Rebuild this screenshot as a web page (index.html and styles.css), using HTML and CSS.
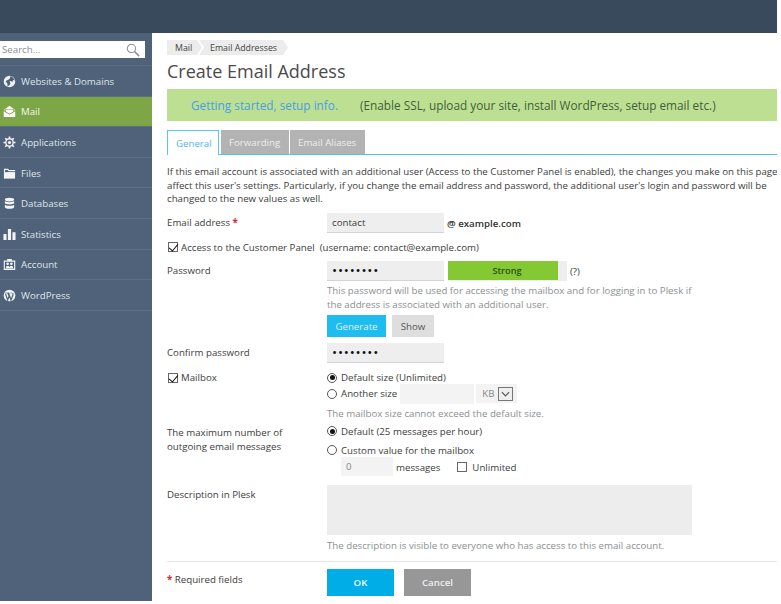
FILE: index.html
```html
<!DOCTYPE html>
<html lang="en">
<head>
<meta charset="utf-8">
<title>Create Email Address</title>
<link rel="stylesheet" href="styles.css">
</head>
<body>
<div class="page">
  <header class="topbar"></header>
  <div class="shell">
    <aside class="sidebar">
      <div class="search">
        <span class="search-text">Search...</span>
        <svg class="search-icon" viewBox="0 0 16 16" width="14" height="14"><circle cx="6.200" cy="6.200" r="4.700" fill="none" stroke="#8a8f93" stroke-width="1.200"/><path d="M9.800 9.800 15 15" stroke="#8a8f93" stroke-width="1.700"/></svg>
      </div>
      <nav class="nav">
        <a class="nav-item">
          <svg class="nav-icon" viewBox="0 0 14 14"><circle cx="7" cy="7" r="6.200" fill="#eef1f4"/><path d="M8 1.200C10 2 12 3.500 12.800 6L11 5.500 10 7.500 8.500 6.500 7 7 8 9 7 11 4.500 12.300C6 9 3.500 8 2.800 7 4 5.500 7 5 7.500 3.500Z" fill="#4e617a"/></svg>
          <span>Websites &amp; Domains</span>
        </a>
        <a class="nav-item active">
          <svg class="nav-icon" viewBox="0 0 14 14"><path d="M.8 5.500 7 .8 13.200 5.500 12 6.300V4.500H2V6.300Z" fill="#fff"/><path d="M3 5H11V7L7 9.300 3 7Z" fill="#fff"/><path d="M.8 6.800 7 10.500 13.200 6.800V13H.8Z" fill="#fff"/></svg>
          <span>Mail</span>
        </a>
        <a class="nav-item">
          <svg class="nav-icon" viewBox="0 0 14 14"><circle cx="7" cy="7" r="4" fill="none" stroke="#f2f4f6" stroke-width="1.500"/><circle cx="7" cy="7" r="1.700" fill="#f2f4f6"/><path d="M7 .5V3M7 11V13.500M.5 7H3M11 7H13.500M2.400 2.400 4 4M10 10 11.600 11.600M2.400 11.600 4 10M10 4 11.600 2.400" stroke="#f2f4f6" stroke-width="1.800"/></svg>
          <span>Applications</span>
        </a>
        <a class="nav-item">
          <svg class="nav-icon" viewBox="0 0 14 14"><path d="M1 1.800H5.500L6.500 3.200H13V4.500H6L5 3.300H2.200V5.300H1Z" fill="#f2f4f6"/><path d="M1 5.500H13V12.500H1Z" fill="#f2f4f6"/></svg>
          <span>Files</span>
        </a>
        <a class="nav-item">
          <svg class="nav-icon" viewBox="0 0 14 14"><ellipse cx="7" cy="2.800" rx="5" ry="2" fill="#f2f4f6"/><path d="M2 4.400C3 6 11 6 12 4.400V6.800C11 8.400 3 8.400 2 6.800ZM2 8.300C3 9.900 11 9.900 12 8.300V11C11 13.300 3 13.300 2 11Z" fill="#f2f4f6"/></svg>
          <span>Databases</span>
        </a>
        <a class="nav-item">
          <svg class="nav-icon" viewBox="0 0 14 14"><path d="M.5 6.500H3.800V12.800H.5ZM5.300 1.200H8.700V12.800H5.300ZM10.200 4.500H13.500V12.800H10.200Z" fill="#f2f4f6"/></svg>
          <span>Statistics</span>
        </a>
        <a class="nav-item">
          <svg class="nav-icon" viewBox="0 0 14 14"><path fill-rule="evenodd" d="M.8 2.800H4.500V1.200H9.500V2.800H13.200V12.800H.8ZM2 4V11.600H12V4Z" fill="#f2f4f6"/><circle cx="5" cy="6.300" r="1.400" fill="#f2f4f6"/><circle cx="9" cy="6.300" r="1.400" fill="#f2f4f6"/><path d="M2.800 11.300 3.800 8.500H6.200L7 9.800 7.800 8.500H10.200L11.200 11.300Z" fill="#f2f4f6"/></svg>
          <span>Account</span>
        </a>
        <a class="nav-item">
          <svg class="nav-icon" viewBox="0 0 14 14"><circle cx="7" cy="7" r="6.300" fill="#f2f4f6"/><path d="M2.700 5.300 5 11.800 6.600 7.500 5.300 4.300M6 4.300 8.600 11.800 10.700 6.500C11 5.500 10.800 5 10.400 4.200" fill="none" stroke="#4e617a" stroke-width="1.300"/><path d="M2 4.300H6.800M7.800 4.300H9.500" stroke="#4e617a" stroke-width=".7"/></svg>
          <span>WordPress</span>
        </a>
      </nav>
    </aside>
    <main class="content">
      <div class="crumbs">
        <span class="crumb first">Mail</span>
        <span class="crumb second">Email Addresses</span>
      </div>
      <h1 class="title">Create Email Address</h1>
      <div class="promo">
        <a class="promo-link">Getting started, setup info.</a>
        <span class="promo-text">(Enable SSL, upload your site, install WordPress, setup email etc.)</span>
      </div>
      <div class="tabs">
        <span class="tab current">General</span>
        <span class="tab">Forwarding</span>
        <span class="tab">Email Aliases</span>
      </div>
      <p class="intro">If this email account is associated with an additional user (Access to the Customer Panel is enabled), the changes you make on this page will affect this user's settings. Particularly, if you change the email address and password, the additional user's login and password will be changed to the new values as well.</p>

      <div class="row row-email">
        <label class="lbl">Email address <b class="req">*</b></label>
        <div class="field inline">
          <span class="input w117">contact</span>
          <span class="domain">@ example.com</span>
        </div>
      </div>

      <div class="row-check">
        <span class="check on"></span>
        <span>Access to the Customer Panel&nbsp; (username: contact@example.com)</span>
      </div>

      <div class="row row-pass">
        <label class="lbl">Password</label>
        <div class="field">
          <div class="inline">
            <span class="input w117 dots">••••••••</span>
            <span class="meter"><span class="meter-fill">Strong</span></span>
            <span class="hint-q">(?)</span>
          </div>
          <p class="note pass-note">This password will be used for accessing the mailbox and for logging in to Plesk if<br>the address is associated with an additional user.</p>
          <div class="inline btns">
            <span class="btn-small primary">Generate</span>
            <span class="btn-small">Show</span>
          </div>
        </div>
      </div>

      <div class="row row-confirm">
        <label class="lbl">Confirm password</label>
        <div class="field"><span class="input w117 dots">••••••••</span></div>
      </div>

      <div class="row row-mailbox">
        <label class="lbl check-lbl"><span class="check on"></span>Mailbox</label>
        <div class="field">
          <div class="radio-line first-line"><span class="radio on"></span>Default size (Unlimited)</div>
          <div class="radio-line size-line">
            <span class="radio"></span>Another size
            <span class="input light w74"></span>
            <span class="unit">KB <span class="select-arrow"><svg viewBox="0 0 10 6" width="9" height="6"><path d="M1 1 5 5 9 1" fill="none" stroke="#555" stroke-width="1.300"/></svg></span></span>
          </div>
          <p class="note box-note">The mailbox size cannot exceed the default size.</p>
        </div>
      </div>

      <div class="row row-limit">
        <label class="lbl">The maximum number of<br>outgoing email messages</label>
        <div class="field">
          <div class="radio-line"><span class="radio on"></span>Default (25 messages per hour)</div>
          <div class="radio-line custom-line"><span class="radio"></span>Custom value for the mailbox</div>
          <div class="inline msg-line">
            <span class="input light w52 zero">0</span>
            <span class="msg-word">messages</span>
            <span class="check"></span>
            <span>Unlimited</span>
          </div>
        </div>
      </div>

      <div class="row row-desc">
        <label class="lbl">Description in Plesk</label>
        <div class="field">
          <div class="textarea"></div>
          <p class="note desc-note">The description is visible to everyone who has access to this email account.</p>
        </div>
      </div>

      <div class="row row-foot">
        <label class="lbl"><b class="req">*</b> Required fields</label>
        <div class="inline foot-btns">
          <span class="btn-big ok">OK</span>
          <span class="btn-big cancel">Cancel</span>
        </div>
      </div>
    </main>
  </div>
</div>
</body>
</html>
```
FILE: styles.css
```css
* { box-sizing: border-box; }
html, body { margin: 0; padding: 0; background: #fff; }
body { font-family: "Open Sans", "Liberation Sans", sans-serif; font-size: 9.7px; color: #3c3c3c; }
.page { width: 777px; height: 601px; overflow: hidden; display: flex; flex-direction: column; }
.topbar { height: 33px; background: #3a4a5d; flex: none; }
.shell { display: flex; flex: 1; min-height: 0; }
.sidebar { width: 152px; flex: none; background: #4f6279; padding-top: 8px; }
.search { height: 17px; width: 145px; background: #fff; display: flex; align-items: center; justify-content: space-between; padding: 0 5px 0 2px; color: #8a8f93; }
.search-icon { display: block; }
.nav { margin-top: 7px; border-top: 1px solid #5a6c84; }
.nav-item { height: 30.6px; display: flex; align-items: center; gap: 5px; padding: 1px 0 0 3px; color: #dfe5ec; border-bottom: 1px solid #5d6f87; }
.nav-item.active { background: #7da647; color: #f3f7ec; }
.nav-icon { width: 13px; height: 13px; flex: none; display: block; }
.content { flex: 1; min-width: 0; padding: 7px 0 0 15px; }
.crumbs { display: flex; height: 15px; font-size: 8.800px; color: #444; }
.crumb { background: #ececec; display: flex; align-items: center; padding-top: 1px; }
.crumb.first { width: 35px; padding-left: 8px; clip-path: polygon(0 0, 30px 0, 35px 50%, 30px 100%, 0 100%); }
.crumb.second { width: 89px; margin-left: -3px; padding-left: 11px; clip-path: polygon(0 0, 84px 0, 89px 50%, 84px 100%, 0 100%, 5px 50%); }
.title { margin: 4px 0 0; font-weight: 400; font-size: 18px; line-height: 24px; color: #4a4a4a; }
.promo { margin-top: 6px; height: 32px; background: #bddf92; display: flex; align-items: center; padding-left: 24px; color: #3f5f3a; font-size: 11.800px; }
.promo-link { color: #4a9ee0; }
.promo-text { margin-left: 22px; }
.tabs { margin-top: 9px; height: 25px; display: flex; gap: 1px; border-bottom: 1px solid #4fc3ee; align-items: flex-end; }
.tab { height: 24px; padding: 1px 0 0 8px; background: #b3b3b3; color: #eee; display: flex; align-items: center; width: 68px; white-space: nowrap; }
.tab:last-child { width: 75px; }
.tab.current { background: #fff; color: #4fb8e8; width: 52px; height: 25px; border: 1px solid #5bc5ee; border-bottom: 0; margin: 0 1px -1px 0; padding: 1px 0 0 8px; }
.intro { margin: 10px 0 0; width: 628px; line-height: 13.500px; }
.row { display: flex; align-items: flex-start; }
.lbl { width: 160px; flex: none; line-height: 14px; display: block; }
.req { color: #d9262c; font-weight: 700; }
.field { flex: 1; min-width: 0; }
.inline { display: flex; align-items: center; }
.input { height: 20px; background: #eeeeee; border-bottom: 1px solid #d0d4d8; display: block; padding: 0 5px; line-height: 19px; }
.input.light { background: #f3f3f3; border: 0; }
.w117 { width: 117px; }
.w74 { width: 74px; margin-left: -1px; }
.w52 { width: 52px; }
.dots { color: #111; font-size: 13.500px; letter-spacing: .8px; line-height: 19px; }
.domain { margin-left: 3px; font-weight: 600; color: #333; padding-top: 1px; }
.row-email { margin-top: 7.500px; }
.row-email .lbl, .row-pass .lbl, .row-confirm .lbl { padding-top: 3px; }
.row-check { margin-top: 7px; display: flex; align-items: center; gap: 3px; height: 14px; padding-left: 1px; }
.check { display: inline-block; width: 10px; height: 10px; border: 1px solid #666; background: #fff; flex: none; position: relative; }
.check.on::after { content: ""; position: absolute; left: 2px; top: -1px; width: 4px; height: 8px; border: solid #111; border-width: 0 1.600px 1.600px 0; transform: rotate(40deg); }
.row-pass { margin-top: 7px; }
.meter { margin-left: 4px; width: 119px; height: 20px; background: #eee; display: block; }
.meter-fill { display: flex; width: 110px; height: 19px; background: #84c934; color: #2e4d12; align-items: center; justify-content: center; font-weight: 600; font-size: 9.200px; padding-left: 8px; }
.hint-q { margin-left: 3px; }
.note { margin: 0; color: #8b8f92; line-height: 14px; }
.pass-note { margin-top: 3px; }
.btns { margin-top: 3px; gap: 6px; }
.btn-small { height: 22px; padding: 0 8px; background: #dedede; color: #555; display: flex; align-items: center; justify-content: center; width: 42px; }
.btn-small.primary { background: #1fbcf0; color: #dff4fb; width: 59px; }
.row-confirm { margin-top: 6px; }
.row-mailbox { margin-top: 7px; }
.check-lbl { display: flex; align-items: center; gap: 3px; height: 15px; padding-left: 1px; }
.radio-line { display: flex; align-items: center; gap: 4px; height: 16px; }
.radio { width: 10px; height: 10px; border-radius: 50%; border: 1px solid #555; background: #fff; flex: none; position: relative; display: block; }
.radio.on::after { content: ""; position: absolute; left: 1.500px; top: 1.500px; width: 5px; height: 5px; border-radius: 50%; background: #111; }
.first-line { height: 15px; }
.size-line { height: 19px; margin-top: -1px; }
.unit { display: flex; align-items: center; justify-content: space-between; background: #f3f3f3; width: 41px; height: 19px; padding: 0 4px 0 6px; margin-left: -2px; color: #888; }
.select-arrow { width: 15px; height: 14px; border: 1px solid #777; display: flex; align-items: center; justify-content: center; background: #eee; }
.box-note { margin-top: 4px; }
.row-limit { margin-top: 2px; }
.row-limit .lbl { padding-top: 3px; line-height: 13.500px; }
.custom-line { margin-top: 3px; }
.msg-line { margin-top: -1px; padding-left: 14px; }
.zero { color: #888; height: 19px; border-bottom: 1px solid #e0e0e0; }
.msg-word { margin-left: 3px; margin-right: 17px; padding-top: 1px; }
.msg-line .check { margin-right: 5px; }
.msg-line .check + span { padding-top: 1px; }
.row-desc { margin-top: 9px; }
.row-desc .lbl { padding-top: 3px; }
.textarea { width: 365px; height: 50px; background: #ededed; }
.desc-note { margin-top: 4px; }
.row-foot { margin-top: 8px; border-top: 1px solid #e6e6e6; padding-top: 7px; }
.row-foot .lbl { padding-top: 4px; }
.foot-btns { gap: 10px; }
.btn-big { width: 67px; height: 27px; display: flex; align-items: center; justify-content: center; font-weight: 600; }
.ok { background: #00ade6; color: #eef9fd; }
.cancel { background: #979797; color: #eee; }
```
